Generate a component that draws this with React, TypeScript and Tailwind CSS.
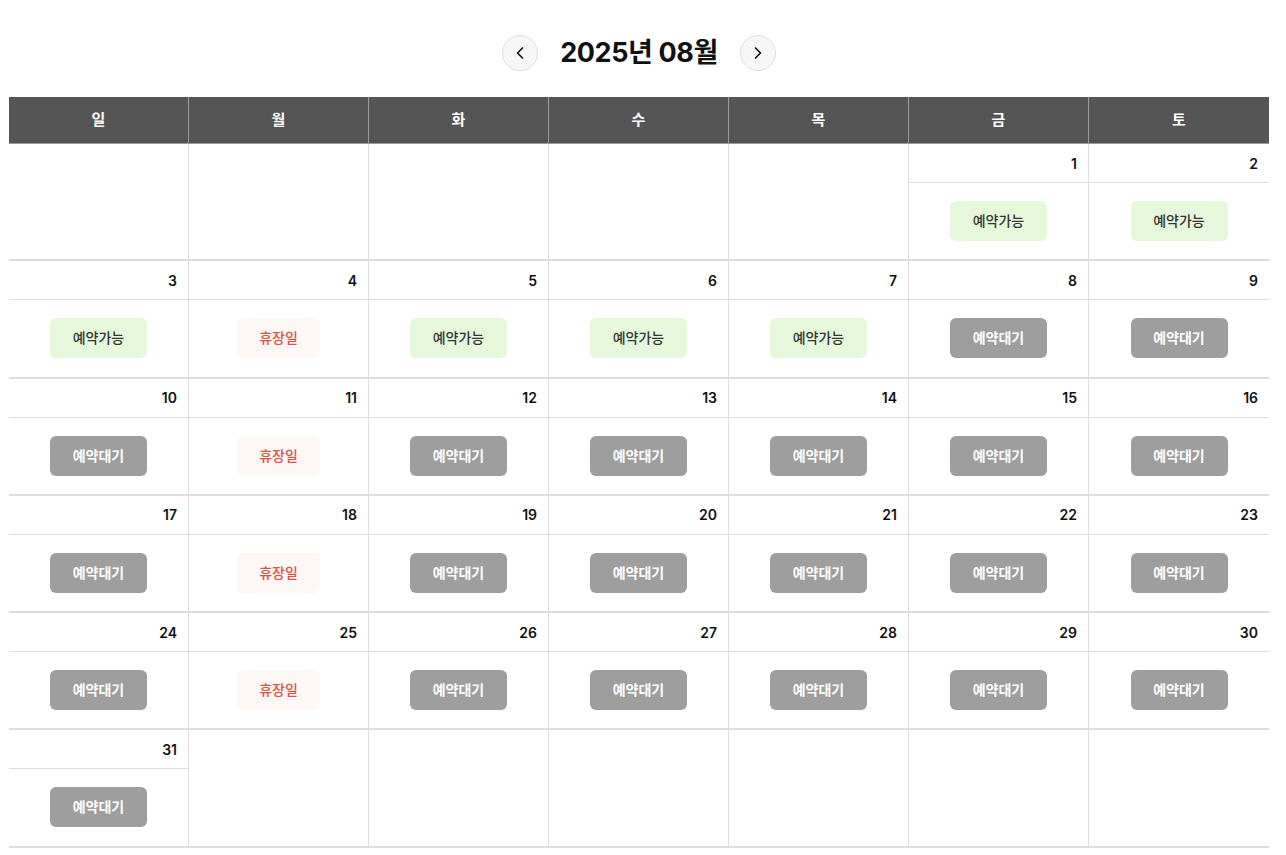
import { ChevronLeft, ChevronRight } from 'lucide-react'

type Status = 'open' | 'closed' | 'wait'

const DAYS = ['일', '월', '화', '수', '목', '금', '토']

const FONT = { fontFamily: 'Inter, "Noto Sans CJK KR", "Noto Sans", sans-serif' }

function statusOf(day: number): Status {
    if (day <= 7) {
        return day === 4 ? 'closed' : 'open'
    }
    // Mondays are closed
    const weekday = (day + 4) % 7
    return weekday === 1 ? 'closed' : 'wait'
}

function StatusBadge({ status }: { status: Status }) {
    if (status === 'open') {
        return (
            <div className="w-[97px] h-10 rounded-md bg-[#e6f8db] text-[#333] text-sm font-medium flex items-center justify-center">
                예약가능
            </div>
        )
    }
    if (status === 'closed') {
        return (
            <div className="w-[83px] h-10 rounded-md bg-[#fdf7f6] text-[#e2533f] text-sm font-medium flex items-center justify-center">
                휴장일
            </div>
        )
    }
    return (
        <div className="w-[97px] h-10 rounded-md bg-[#9e9e9e] text-white text-sm font-bold flex items-center justify-center">
            예약대기
        </div>
    )
}

function DayCell({ day, last }: { day: number | null; last: boolean }) {
    return (
        <div className={last ? 'flex flex-col' : 'flex flex-col border-r border-[#dddddd]'}>
            {day ? (
                <>
                    <div className="h-[39px] border-b border-[#dddddd] flex items-center justify-end pr-[11px] text-[14px] font-semibold text-[#111]">
                        {day}
                    </div>
                    <div className="h-[76.25px] flex items-center justify-center">
                        <StatusBadge status={statusOf(day)} />
                    </div>
                </>
            ) : (
                <div className="h-[115.25px]" />
            )}
        </div>
    )
}

export default function App() {
    const cells: (number | null)[] = [null, null, null, null, null]
    for (let d = 1; d <= 31; d++) cells.push(d)
    while (cells.length % 7 !== 0) cells.push(null)
    const weeks: (number | null)[][] = []
    for (let i = 0; i < cells.length; i += 7) weeks.push(cells.slice(i, i + 7))

    return (
        <div className="min-h-screen bg-white" style={FONT}>
            <div className="ml-[9px] w-[1260px]">
                <div className="flex items-center justify-center gap-[22px] pt-[9px] h-[97px]">
                    <button className="w-9 h-9 rounded-full border border-[#dedede] bg-[#f7f7f8] flex items-center justify-center text-[#111]">
                        <ChevronLeft className="w-5 h-5" strokeWidth={2} />
                    </button>
                    <h1 className="text-[27px] font-bold text-[#111] tracking-[-0.4px]">2025년 08월</h1>
                    <button className="w-9 h-9 rounded-full border border-[#dedede] bg-[#f7f7f8] flex items-center justify-center text-[#111]">
                        <ChevronRight className="w-5 h-5" strokeWidth={2} />
                    </button>
                </div>

                <div className="grid grid-cols-7 bg-[#555555] border-b border-[#999999]">
                    {DAYS.map((d, i) => (
                        <div
                            key={d}
                            className={i < 6 ? 'h-[46px] flex items-center justify-center text-white text-[15px] font-bold border-r border-[#9a9a9a]' : 'h-[46px] flex items-center justify-center text-white text-[15px] font-bold'}
                        >
                            {d}
                        </div>
                    ))}
                </div>
                {weeks.map((week, wi) => (
                    <div key={wi} className="grid grid-cols-7 border-b-2 border-[#dddddd]">
                        {week.map((day, di) => (
                            <DayCell key={di} day={day} last={di === 6} />
                        ))}
                    </div>
                ))}
            </div>
        </div>
    )
}
